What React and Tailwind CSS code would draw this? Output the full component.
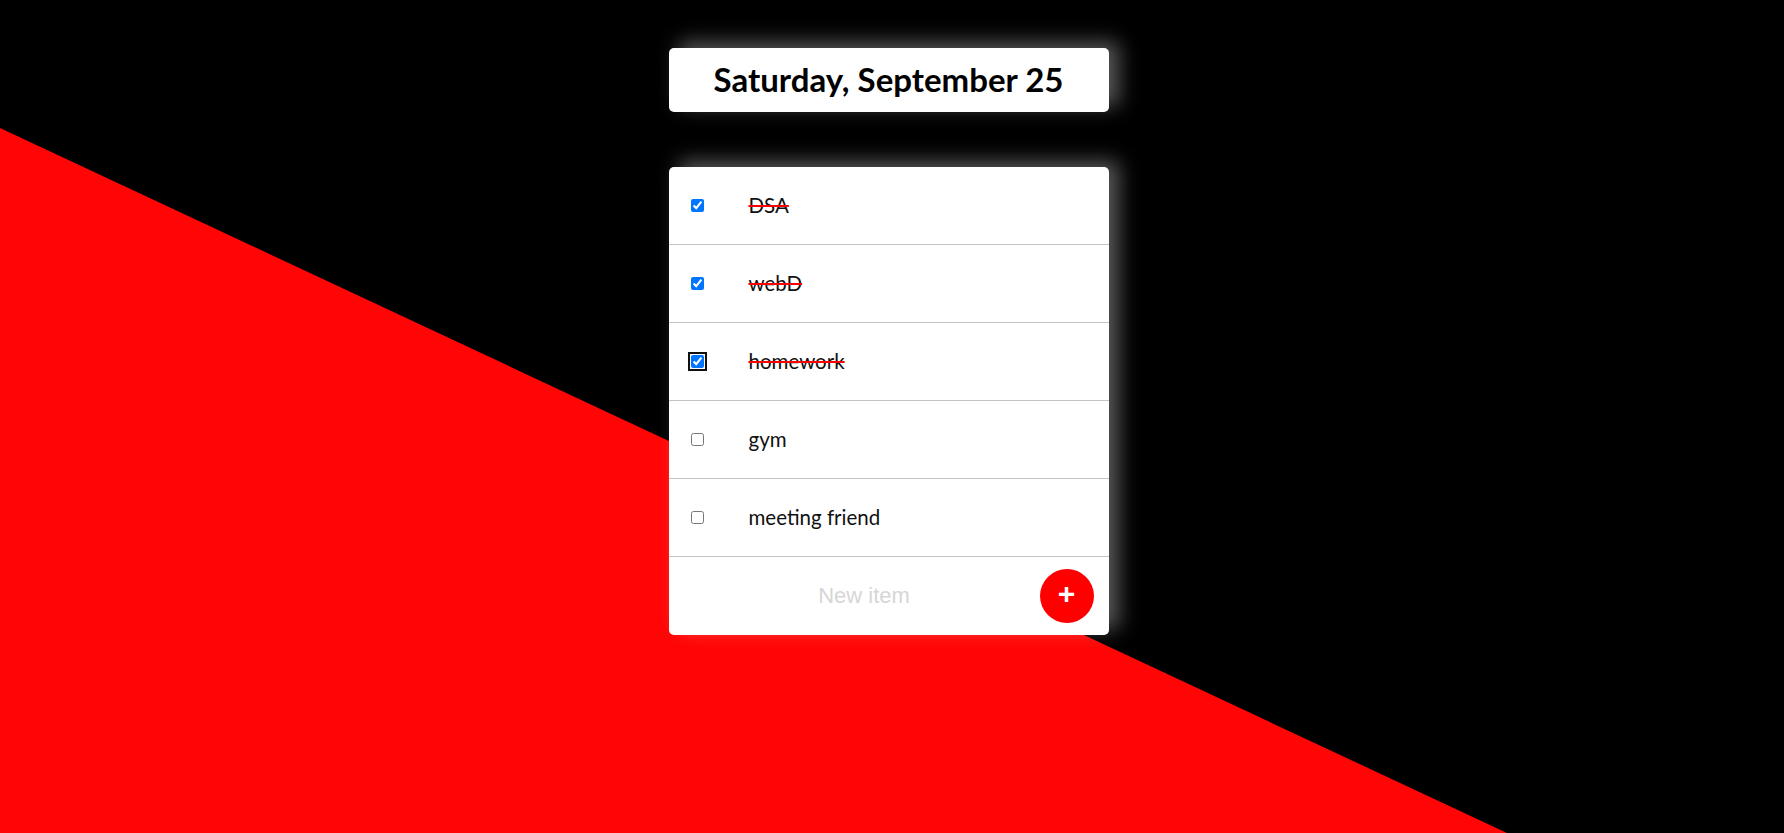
import React from "react";

const items = [
  { text: "DSA", done: true },
  { text: "webD", done: true },
  { text: "homework", done: true, focus: true },
  { text: "gym", done: false },
  { text: "meeting friend", done: false },
];

export default function App() {
  return (
    <div className="relative min-h-[833px] w-full overflow-hidden bg-black" style={{ fontFamily: "Lato, 'Noto Sans', sans-serif" }}>
      <svg className="absolute inset-0 h-full w-full" viewBox="0 0 1784 833" preserveAspectRatio="none">
        <polygon points="0,128 1507,833 0,833" fill="#ff0505" />
      </svg>
      <div className="relative flex flex-col items-center pt-[48px] pr-[7px]">
        <div className="flex h-[64px] w-[440px] items-center justify-center rounded-[5px] bg-white shadow-[10px_-6px_20px_rgba(255,255,255,0.35)]">
          <h1 className="text-[33px] font-bold text-black">Saturday, September 25</h1>
        </div>
        <div className="mt-[55px] w-[440px] rounded-[5px] bg-white shadow-[10px_-6px_20px_rgba(255,255,255,0.35)]">
          {items.map((it, i) => (
            <div key={i} className="flex h-[78px] items-center border-b border-[#c4c4c4]">
              <input
                type="checkbox"
                defaultChecked={it.done}
                className={
                  "ml-[22px] mr-[20px] h-[13px] w-[13px] shrink-0 " +
                  (it.focus ? "rounded-[2px] outline-2 outline-offset-1 outline-[#101010]" : "")
                }
              />
              <p
                className={
                  "pl-[25px] text-[20.5px] text-[#111] " +
                  (it.done ? "line-through decoration-[#ff0000] decoration-2" : "")
                }
              >
                {it.text}
              </p>
            </div>
          ))}
          <div className="flex h-[78px] items-center pl-[20px] pr-[15px]">
            <input
              type="text"
              placeholder="New item"
              className="h-[60px] min-w-0 flex-1 bg-transparent text-center text-[22px] outline-none placeholder:text-[#d6d6d6]"
              style={{ fontFamily: "'Liberation Sans', Arial, sans-serif" }}
            />
            <button
              className="flex h-[54px] w-[54px] shrink-0 items-center justify-center rounded-full bg-[#ff0000] pb-[6px] text-[30px] font-bold text-white"
              style={{ fontFamily: "'Liberation Sans', Arial, sans-serif" }}
            >
              +
            </button>
          </div>
        </div>
      </div>
    </div>
  );
}
